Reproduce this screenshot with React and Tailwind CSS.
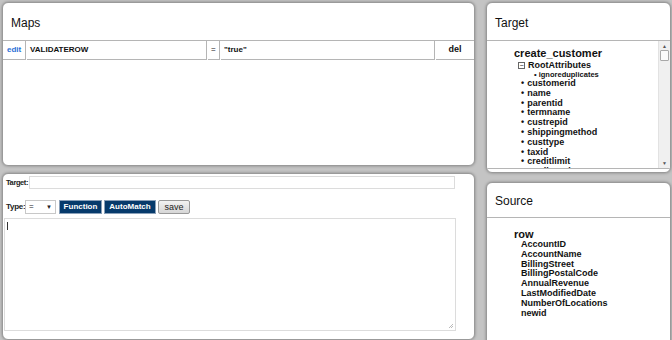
import { useState } from 'react'

const TARGET_FIELDS = ['customerid', 'name', 'parentid', 'termname', 'custrepid', 'shippingmethod', 'custtype', 'taxid', 'creditlimit', 'creditcard']
const SOURCE_FIELDS = ['AccountID', 'AccountName', 'BillingStreet', 'BillingPostalCode', 'AnnualRevenue', 'LastModifiedDate', 'NumberOfLocations', 'newid']

function Panel({ className, children }) {
  return (
    <div className={'shrink-0 bg-white rounded-[6px] border border-[#9a9a9a] shadow-[0_0_3px_rgba(0,0,0,0.35)] overflow-hidden flex flex-col ' + className}>
      {children}
    </div>
  )
}

function Header({ title, h }) {
  return (
    <div className={'shrink-0 border-b border-[#b5b5b5] pl-[8px] flex items-center text-[12px] text-[#111] ' + h}>
      {title}
    </div>
  )
}

export default function App() {
  const [type, setType] = useState('=')

  return (
    <div className="w-[672px] h-[340px] overflow-hidden bg-[#c4c4c4] flex gap-[11px] pl-[2px] pt-[2px]" style={{ fontFamily: '"Liberation Sans", Arial, sans-serif' }}>
      {/* left column */}
      <div className="w-[473px] flex flex-col gap-[7px]">
        <Panel className="h-[164px]">
          <Header title="Maps" h="h-[38px] pt-[2px]" />
          <div className="flex gap-[1px] text-[8px] font-bold text-[#111] h-[19px]">
            <div className="w-[23px] border-b border-r border-[#b5b5b5] flex items-center pl-[4px] text-[#2a6fd6]">edit</div>
            <div className="w-[180px] border-b border-r border-[#b5b5b5] flex items-center pl-[3px]">VALIDATEROW</div>
            <div className="w-[12px] border-b border-r border-[#b5b5b5] flex items-center pl-[3px] font-normal">=</div>
            <div className="w-[214px] border-b border-r border-[#b5b5b5] flex items-center pl-[3px]">"true"</div>
            <div className="flex-1 border-b border-[#b5b5b5] flex items-center justify-center text-[9px]">del</div>
          </div>
        </Panel>

        <Panel className="h-[167px] px-[1px]">
          <div className="flex items-center h-[15px] mt-[1px] text-[7.5px] font-bold text-[#222]">
            <span className="shrink-0 w-[25px] pl-[2px] whitespace-nowrap tracking-[-0.4px]">Target:</span>
            <input className="w-[426px] h-[13px] border border-[#dcdcdc] outline-none" />
          </div>
          <div className="flex items-center mt-[10px] h-[14px] text-[8px] font-bold text-[#222]">
            <span className="shrink-0 w-[21px] pl-[2px] whitespace-nowrap tracking-[-0.3px]">Type:</span>
            <div className="w-[31px] h-[14px] border border-[#c8c8c8] flex items-center justify-between px-[3px] font-normal">
              <span>{type}</span>
              <span className="text-[6px]">▼</span>
            </div>
            <button onClick={() => setType('=')} className="ml-[3px] h-[14px] w-[43px] bg-[#063a6b] text-white text-[8px] font-bold border border-[#8aa0b8]">Function</button>
            <button className="ml-[2px] h-[14px] w-[52px] bg-[#063a6b] text-white text-[8px] font-bold border border-[#8aa0b8]">AutoMatch</button>
            <button className="ml-[2px] h-[14px] w-[32px] bg-gradient-to-b from-[#f2f2f2] to-[#d6d6d6] text-[#222] text-[9px] font-normal border border-[#999] rounded-[2px]">save</button>
          </div>
          <div className="relative mt-[4px] w-[452px] h-[113px] border border-[#dcdcdc]">
            <div className="absolute left-[2px] top-[3px] w-[1px] h-[8px] bg-[#333]" />
            <svg className="absolute right-[1px] bottom-[1px]" width="6" height="6" viewBox="0 0 6 6">
              <path d="M5 1 L1 5 M5 3 L3 5" stroke="#aaa" strokeWidth="0.8" />
            </svg>
          </div>
        </Panel>
      </div>

      {/* right column */}
      <div className="w-[185px] flex flex-col gap-[9px]">
        <Panel className="h-[171px]">
          <Header title="Target" h="h-[38px] pt-[2px]" />
          <div className="flex h-[128px] border-b border-[#b5b5b5]">
            <div className="flex-1 overflow-hidden pl-[27px] pt-[6px] text-[#111] font-bold">
              <div className="text-[11px] leading-[13px]">create_customer</div>
              <div className="flex items-center text-[9px] leading-[10px] pl-[4px]">
                <span className="w-[7px] h-[7px] border border-[#666] text-[7px] leading-[5px] flex items-center justify-center mr-[3px] font-normal">−</span>
                RootAttributes
              </div>
              <div className="text-[7.5px] leading-[9px] pl-[20px]">• ignoreduplicates</div>
              {TARGET_FIELDS.map(f => (
                <div key={f} className="text-[9px] leading-[9.8px] pl-[7px]">
                  <span className="mr-[3px]">•</span>{f}
                </div>
              ))}
            </div>
            <div className="w-[12px] bg-[#f0f0f0] border-l border-[#e2e2e2] flex flex-col items-center">
              <span className="text-[5px] text-[#555] mt-[2px] leading-[6px]">▲</span>
              <div className="w-[9px] h-[11px] bg-[#fafafa] border border-[#a8a8a8] rounded-[1px] mt-[1px]" />
              <div className="flex-1" />
              <span className="text-[5px] text-[#555] mb-[2px] leading-[6px]">▼</span>
            </div>
          </div>
        </Panel>

        <Panel className="h-[170px]">
          <Header title="Source" h="h-[35px] pt-[2px]" />
          <div className="pl-[27px] pt-[11px] text-[#111] font-bold">
            <div className="text-[11px] leading-[11px]">row</div>
            {SOURCE_FIELDS.map(f => (
              <div key={f} className="text-[9px] leading-[9.8px] pl-[7px]">{f}</div>
            ))}
          </div>
        </Panel>
      </div>
    </div>
  )
}
